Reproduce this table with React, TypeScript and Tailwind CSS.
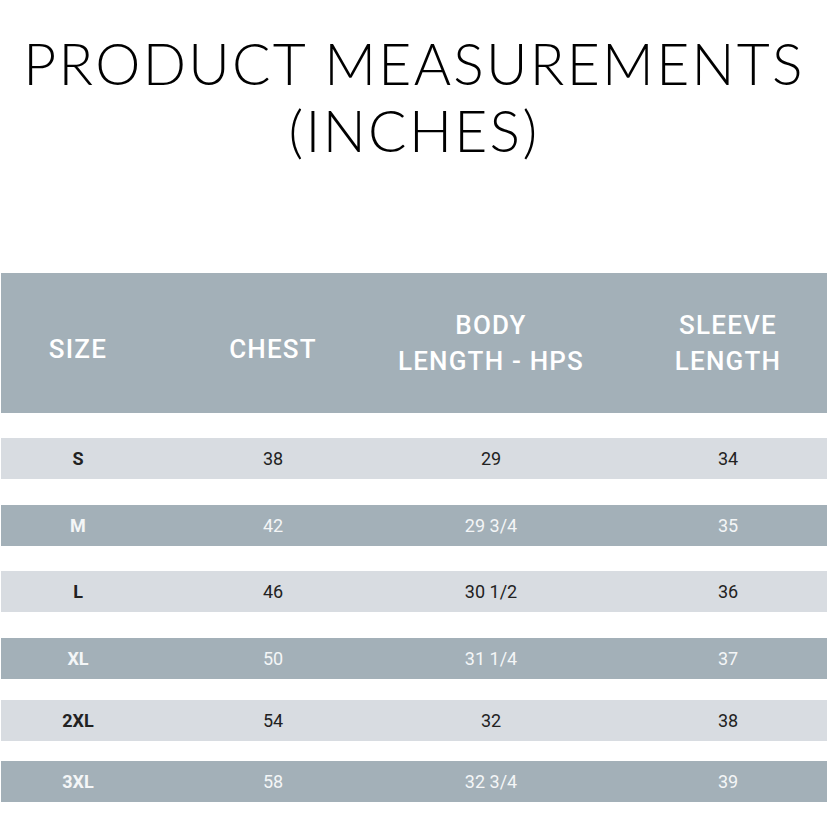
const rows = [
  { size: "S", chest: "38", body: "29", sleeve: "34", dark: false, mt: "mt-[25px]" },
  { size: "M", chest: "42", body: "29 3/4", sleeve: "35", dark: true, mt: "mt-[26px]" },
  { size: "L", chest: "46", body: "30 1/2", sleeve: "36", dark: false, mt: "mt-[25px]" },
  { size: "XL", chest: "50", body: "31 1/4", sleeve: "37", dark: true, mt: "mt-[26px]" },
  { size: "2XL", chest: "54", body: "32", sleeve: "38", dark: false, mt: "mt-[21px]" },
  { size: "3XL", chest: "58", body: "32 3/4", sleeve: "39", dark: true, mt: "mt-[20px]" },
];

const cols = "grid grid-cols-[154px_236px_200px_1fr] items-center text-center";

const App = () => {
  return (
    <div className="w-[828px] h-[838px] bg-white overflow-hidden font-['Roboto',sans-serif]">
      <h1 className="pt-[30px] text-center text-[57px] leading-[67px] font-light text-black font-['Lato',sans-serif] tracking-[2.3px]">
        PRODUCT MEASUREMENTS
        <br />
        (INCHES)
      </h1>

      <div className="mt-[109px] ml-[1px] w-[826px]">
        <div className={`${cols} h-[140px] bg-[#a3b0b8] text-white font-medium text-[26px] leading-[36px] tracking-[1.2px]`}>
          <div className="pt-[12px]">SIZE</div>
          <div className="pt-[12px]">CHEST</div>
          <div>
            BODY
            <br />
            LENGTH - HPS
          </div>
          <div className="pl-[38px]">
            SLEEVE
            <br />
            LENGTH
          </div>
        </div>

        {rows.map((r) => (
          <div
            key={r.size}
            className={`${cols} ${r.mt} h-[41px] ${r.dark ? "bg-[#a3b0b8] text-[#f4f6f7]" : "bg-[#d8dce1] text-[#222]"}`}
          >
            <div className="font-bold text-[18px]">{r.size}</div>
            <div className="text-[18px]">{r.chest}</div>
            <div className="text-[18px]">{r.body}</div>
            <div className="text-[18px] pl-[38px]">{r.sleeve}</div>
          </div>
        ))}
      </div>
    </div>
  );
};

export default App;
